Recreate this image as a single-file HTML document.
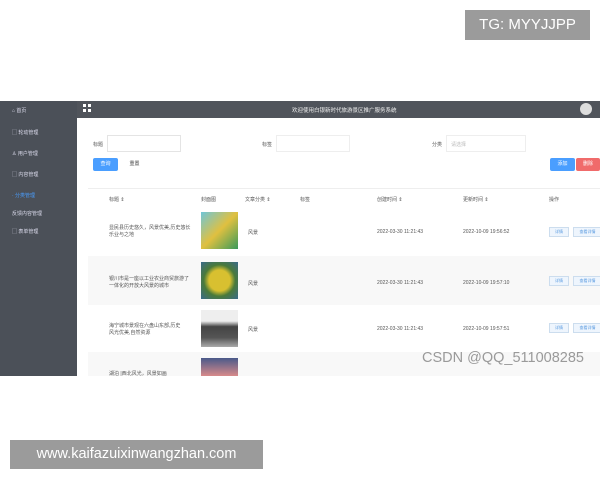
<!DOCTYPE html><html><head><meta charset="utf-8"><style>
body{margin:0;width:600px;height:480px;background:#fff;position:relative;overflow:hidden;font-family:"Liberation Sans","Noto Sans CJK SC",sans-serif;font-size:5px;color:#555}
.a{position:absolute}
.side{left:0;top:101px;width:77px;height:275px;background:#4b5058}
.side div{position:absolute;left:12px;color:#dde;font-size:5px}
.hdr{left:77px;top:101px;width:523px;height:17px;background:#50545b;color:#eee;font-size:5.5px}
.btn{position:absolute;height:13px;color:#fff;font-size:5px;text-align:center;line-height:13px;border-radius:2px}
.img{position:absolute;left:201px;width:37px;height:37px}
.sb{position:absolute;height:8px;border:1px solid #cde;background:#eef5fd;font-size:4px;line-height:8px;text-align:center;color:#5a9be0}
</style></head><body>
<div class="a" style="left:465px;top:10px;width:125px;height:30px;background:#9b9b9b;color:#fff;font-size:15px;line-height:30px;text-align:center">TG: MYYJJPP</div>
<div class="a side">
<div style="top:6px">⌂ 首页</div>
<div style="top:28px">▢ 轮动管理</div>
<div style="top:49px">♙ 用户管理</div>
<div style="top:70px">▢ 内容管理</div>
<div style="top:91px;color:#4a9eff">· 分类管理</div>
<div style="top:109px">反馈内容管理</div>
<div style="top:127px">▢ 表单管理</div>
</div>
<div class="a hdr"><div class="a" style="left:6px;top:3px;width:8px;height:8px;background:linear-gradient(#fff,#fff) 0 0/3px 3px no-repeat,linear-gradient(#fff,#fff) 5px 0/3px 3px no-repeat,linear-gradient(#fff,#fff) 0 5px/3px 3px no-repeat,linear-gradient(#fff,#fff) 5px 5px/3px 3px no-repeat"></div>
<div class="a" style="left:215px;top:5px">欢迎使用白银新时代旅游景区推广服务系统</div>
<div class="a" style="left:503px;top:2px;width:12px;height:12px;border-radius:50%;background:#ddd"></div></div>
<div class="a" style="left:93px;top:141px">标题</div>
<div class="a" style="left:107px;top:135px;width:72px;height:15px;border:1px solid #e4e4e4"></div>
<div class="a" style="left:262px;top:141px">标签</div>
<div class="a" style="left:276px;top:135px;width:72px;height:15px;border:1px solid #eee"></div>
<div class="a" style="left:432px;top:141px">分类</div>
<div class="a" style="left:451px;top:141px;color:#bbb">请选择</div>
<div class="a" style="left:446px;top:135px;width:78px;height:15px;border:1px solid #eee"></div>
<div class="btn" style="left:93px;top:158px;width:25px;background:#4a9eff">查询</div>
<div class="btn" style="left:122px;top:158px;width:25px;color:#444">重置</div>
<div class="btn" style="left:550px;top:158px;width:25px;background:#4a9eff">添加</div>
<div class="btn" style="left:576px;top:158px;width:24px;background:#f06b6b">删除</div>
<div class="a" style="left:88px;top:188px;width:512px;height:188px;border-top:1px solid #eee"></div>
<div class="a" style="left:88px;top:256px;width:512px;height:49px;background:#f8f8f8"></div>
<div class="a" style="left:88px;top:352px;width:512px;height:24px;background:#f8f8f8"></div>
<div class="a" style="left:109px;top:196px">标题 ⇕</div><div class="a" style="left:201px;top:196px">封面图</div>
<div class="a" style="left:245px;top:196px">文章分类 ⇕</div><div class="a" style="left:300px;top:196px">标签</div>
<div class="a" style="left:377px;top:196px">创建时间 ⇕</div><div class="a" style="left:463px;top:196px">更新时间 ⇕</div>
<div class="a" style="left:549px;top:196px">操作</div>
<div class="img" style="top:212px;background:linear-gradient(135deg,#6fc6d8,#e0c040 50%,#3a9a5a)"></div>
<div class="img" style="top:262px;background:radial-gradient(#d8c030 40%,#4a7a3a 60%,#3a6a8a)"></div>
<div class="img" style="top:310px;background:linear-gradient(#eee 30%,#444 45%,#555 75%,#aaa)"></div>
<div class="img" style="top:358px;height:18px;background:linear-gradient(#4a5a8a,#d88a8a)"></div>
<div class="a" style="left:109px;top:225px;width:85px;line-height:7px">显民县历史悠久，风景优美,历史悠长<br>乐业与之地</div>
<div class="a" style="left:109px;top:276px;width:85px;line-height:7px">银川市是一座以工业农业商贸旅游了<br>一体化的开放大风景的城市</div>
<div class="a" style="left:109px;top:323px;width:85px;line-height:7px">海宁城市景观在六盘山东部,历史<br>风光优美,自然资源</div>
<div class="a" style="left:109px;top:370px">湖泊 |西北风光，风景如画</div>
<div class="a" style="left:248px;top:229px">风景</div><div class="a" style="left:248px;top:280px">风景</div><div class="a" style="left:248px;top:326px">风景</div>
<div class="a" style="left:377px;top:229px">2022-03-30 11:21:43</div><div class="a" style="left:463px;top:229px">2022-10-09 19:56:52</div>
<div class="a" style="left:377px;top:280px">2022-03-30 11:21:43</div><div class="a" style="left:463px;top:280px">2022-10-09 19:57:10</div>
<div class="a" style="left:377px;top:326px">2022-03-30 11:21:43</div><div class="a" style="left:463px;top:326px">2022-10-09 19:57:51</div>
<div class="sb" style="left:549px;top:227px;width:18px">详情</div><div class="sb" style="left:573px;top:227px;width:27px">查看详情</div>
<div class="sb" style="left:549px;top:276px;width:18px">详情</div><div class="sb" style="left:573px;top:276px;width:27px">查看详情</div>
<div class="sb" style="left:549px;top:323px;width:18px">详情</div><div class="sb" style="left:573px;top:323px;width:27px">查看详情</div>
<div class="a" style="left:422px;top:350px;font-size:14.5px;color:#9a9a9a">CSDN @QQ_511008285</div>
<div class="a" style="left:10px;top:440px;width:253px;height:29px;background:#9b9b9b;color:#fff;font-size:14.5px;line-height:29px;text-align:center">www.kaifazuixinwangzhan.com</div>
</body></html>
